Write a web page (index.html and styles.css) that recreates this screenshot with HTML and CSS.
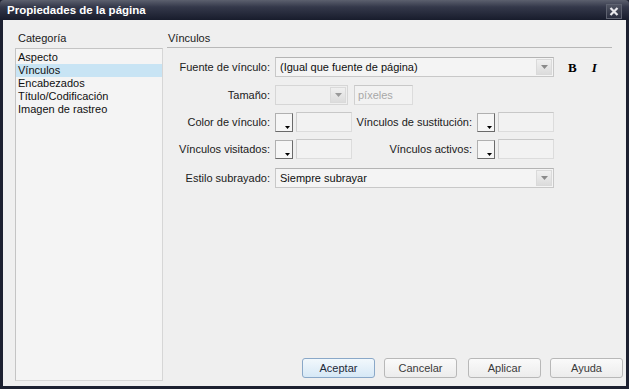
FILE: index.html
```html
<!DOCTYPE html>
<html lang="es">
<head>
<meta charset="utf-8">
<title>Propiedades de la página</title>
<link rel="stylesheet" href="styles.css">
</head>
<body>
<div class="window">
  <div class="titlebar">
    <span class="title">Propiedades de la página</span>
    <span class="close"><svg width="10" height="9" viewBox="0 0 10 9"><path d="M1.5 1 L8.5 8 M8.5 1 L1.5 8" stroke="#e8e8ec" stroke-width="2.2" fill="none"/></svg></span>
  </div>
  <div class="content">
    <div class="sidebar">
      <div class="cat-label">Categoría</div>
      <ul class="listbox">
        <li>Aspecto</li>
        <li class="selected">Vínculos</li>
        <li>Encabezados</li>
        <li>Título/Codificación</li>
        <li>Imagen de rastreo</li>
      </ul>
    </div>
    <div class="main">
      <div class="section-title">Vínculos</div>
      <div class="form">
        <div class="row">
          <label class="lbl">Fuente de vínculo:</label>
          <div class="combo combo-wide"><span class="combo-text">(Igual que fuente de página)</span><span class="arrow"><svg width="7" height="4" viewBox="0 0 7 4"><path d="M0 0 H7 L3.5 4 Z" fill="#8a8a8a"/></svg></span></div>
          <span class="fmt fmt-b">B</span>
          <span class="fmt fmt-i">I</span>
        </div>
        <div class="row row-size">
          <label class="lbl">Tamaño:</label>
          <div class="combo combo-size disabled"><span class="combo-text"></span><span class="arrow"><svg width="7" height="4" viewBox="0 0 7 4"><path d="M0 0 H7 L3.5 4 Z" fill="#9a9a9a"/></svg></span></div>
          <div class="field field-units">píxeles</div>
        </div>
        <div class="row">
          <label class="lbl">Color de vínculo:</label>
          <span class="swatch"><svg width="5" height="3" viewBox="0 0 5 3"><path d="M0 0 H5 L2.5 3 Z" fill="#000"/></svg></span>
          <div class="field field-color"></div>
          <label class="lbl2">Vínculos de sustitución:</label>
          <span class="swatch"><svg width="5" height="3" viewBox="0 0 5 3"><path d="M0 0 H5 L2.5 3 Z" fill="#000"/></svg></span>
          <div class="field field-color"></div>
        </div>
        <div class="row">
          <label class="lbl">Vínculos visitados:</label>
          <span class="swatch"><svg width="5" height="3" viewBox="0 0 5 3"><path d="M0 0 H5 L2.5 3 Z" fill="#000"/></svg></span>
          <div class="field field-color"></div>
          <label class="lbl2">Vínculos activos:</label>
          <span class="swatch"><svg width="5" height="3" viewBox="0 0 5 3"><path d="M0 0 H5 L2.5 3 Z" fill="#000"/></svg></span>
          <div class="field field-color"></div>
        </div>
        <div class="row row-style">
          <label class="lbl">Estilo subrayado:</label>
          <div class="combo combo-wide"><span class="combo-text">Siempre subrayar</span><span class="arrow"><svg width="7" height="4" viewBox="0 0 7 4"><path d="M0 0 H7 L3.5 4 Z" fill="#8a8a8a"/></svg></span></div>
        </div>
      </div>
      <div class="buttons">
        <button class="btn btn-default">Aceptar</button>
        <button class="btn">Cancelar</button>
        <button class="btn btn-apply">Aplicar</button>
        <button class="btn">Ayuda</button>
      </div>
    </div>
  </div>
</div>
</body>
</html>
```
FILE: styles.css
```css
* { box-sizing: border-box; }
html, body { margin: 0; padding: 0; }
body {
  width: 629px;
  height: 389px;
  overflow: hidden;
  font-family: "Liberation Sans", Arial, sans-serif;
  font-size: 11px;
  color: #000;
  background: #1c2030;
}
.window {
  width: 629px;
  height: 389px;
  display: flex;
  flex-direction: column;
  background: #1c2030;
  padding: 0 3px 3px 3px;
}
.titlebar {
  height: 20px;
  margin: 0 -3px;
  padding: 0 7px 0 7px;
  display: flex;
  align-items: center;
  justify-content: space-between;
  background: linear-gradient(#5c606e 0%, #34384a 35%, #181c2c 100%);
  color: #fff;
  border-radius: 4px 4px 0 0;
}
.title {
  font-weight: bold;
  font-size: 11.5px;
}
.close {
  width: 16px;
  height: 15px;
  border: 1px solid #5e6270;
  background: linear-gradient(#505462, #2a2e40);
  display: flex;
  align-items: center;
  justify-content: center;
  margin-top: 2px;
}
.close svg { display: block; }
.content {
  flex: 1;
  display: flex;
  background: #efefef;
  padding: 12px 0 5px 12px;
}
.sidebar {
  width: 148px;
  display: flex;
  flex-direction: column;
}
.cat-label {
  line-height: 13px;
  padding-left: 3px;
  margin-bottom: 3px;
  color: #202020;
}
.listbox {
  flex: 1;
  list-style: none;
  margin: 0;
  padding: 2px 0 0 0;
  background: #f4f4f4;
  border: 1px solid #d6d6d6;
  border-top-color: #c4c4c4;
  border-left-color: #c4c4c4;
}
.listbox li {
  line-height: 13px;
  height: 13px;
  padding-left: 2px;
  color: #101010;
}
.listbox li.selected {
  background: #c8e4f4;
}
.main {
  flex: 1;
  display: flex;
  flex-direction: column;
  padding-left: 4px;
  padding-right: 3px;
}
.section-title {
  line-height: 13px;
  padding-left: 1px;
  padding-bottom: 2px;
  border-bottom: 1px solid #b8b8b8;
  margin-right: 11px;
  color: #202020;
}
.form {
  display: flex;
  flex-direction: column;
  gap: 7px;
  margin-top: 9px;
}
.row {
  display: flex;
  align-items: center;
  height: 20px;
}
.row-size { margin-top: 1px; }
.row-style { margin-top: 2px; }
.lbl {
  width: 103px;
  text-align: right;
  margin-right: 5px;
  color: #202020;
}
.lbl2 {
  width: 120px;
  text-align: right;
  margin-right: 5px;
  color: #202020;
}
.combo {
  height: 20px;
  display: flex;
  align-items: center;
  justify-content: space-between;
  background: #f4f4f4;
  border: 1px solid #c8c8c8;
  border-top-color: #b4b4b4;
  padding: 0 1px 0 4px;
}
.combo-wide { width: 279px; }
.combo-size { width: 73px; }
.combo-text { color: #101010; }
.arrow {
  width: 16px;
  height: 16px;
  display: flex;
  align-items: center;
  justify-content: center;
  background: linear-gradient(#f0f0f0, #dcdcdc);
  border: 1px solid #dadada;
}
.arrow svg { display: block; }
.combo.disabled { background: #efefef; border-color: #d6d6d6; }
.fmt {
  font-family: "Liberation Serif", "Times New Roman", serif;
  font-weight: bold;
  font-size: 13px;
  line-height: 13px;
}
.fmt-b { margin-left: 14px; }
.fmt-i { font-style: italic; margin-left: 15px; }
.field {
  height: 20px;
  background: #f2f2f2;
  border: 1px solid #dcdcdc;
  border-top-color: #c8c8c8;
  border-left-color: #d0d0d0;
}
.field-units {
  width: 59px;
  margin-left: 6px;
  color: #a8a8a8;
  line-height: 18px;
  padding-left: 3px;
}
.field-color {
  width: 56px;
  margin-left: 3px;
}
.swatch {
  flex: 0 0 18px;
  height: 19px;
  position: relative;
  background: #f6f6f6;
  border: 1px solid #b0b0b0;
  border-right-color: #6a6a6a;
  border-bottom-color: #6a6a6a;
}
.swatch svg {
  position: absolute;
  right: 2px;
  bottom: 2px;
  display: block;
}
.buttons {
  margin-top: auto;
  display: flex;
  justify-content: flex-end;
  gap: 9px;
  padding-bottom: 3px;
}
.btn {
  width: 73px;
  height: 20px;
  font-family: "Liberation Sans", Arial, sans-serif;
  font-size: 11px;
  color: #3a3a3a;
  background: linear-gradient(#fafafa, #ececec);
  border: 1px solid #b8b8b8;
  border-radius: 3px;
  padding: 0;
}
.btn-apply { margin-left: 2px; }
.btn-default {
  color: #1c2838;
  background: linear-gradient(#f2f8fc, #d6e8f6);
  border-color: #8aa8c8;
}
```
